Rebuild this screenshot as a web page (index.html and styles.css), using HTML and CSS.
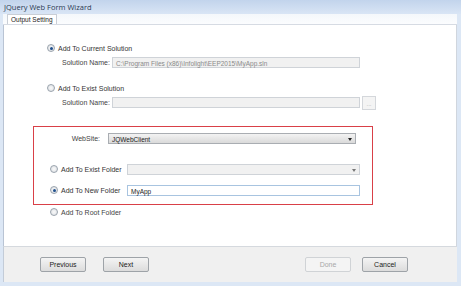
FILE: index.html
```html
<!DOCTYPE html>
<html lang="en">
  <head>
    <meta charset="UTF-8" />
    <title>JQuery Web Form Wizard</title>
    <link rel="stylesheet" href="styles.css">
  </head>
  <body>
    <div class="window">
      <div class="titlebar">JQuery Web Form Wizard</div>

      <div class="tabs">
        <div class="tab">Output Setting</div>
      </div>

      <div class="panel">
        <div class="row opt">
          <span class="radio checked"></span>
          <span>Add To Current Solution</span>
        </div>
        <div class="row sub">
          <span class="label">Solution Name:</span>
          <span class="field disabled">C:\Program Files (x86)\Infolight\EEP2015\MyApp.sln</span>
        </div>

        <div class="row opt gap-lg">
          <span class="radio"></span>
          <span>Add To Exist Solution</span>
        </div>
        <div class="row sub">
          <span class="label">Solution Name:</span>
          <span class="field disabled"></span>
          <span class="browse">...</span>
        </div>

        <div class="highlight">
          <div class="row site">
            <span class="label right">WebSite:</span>
            <span class="field select">JQWebClient<span class="arrow"></span></span>
          </div>
          <div class="row folder exist">
            <span class="radio"></span>
            <span class="folder-label">Add To Exist Folder</span>
            <span class="field disabled wide">
              <span class="arrow light"></span>
            </span>
          </div>
          <div class="row folder new">
            <span class="radio checked"></span>
            <span class="folder-label">Add To New Folder</span>
            <span class="field active wide">MyApp</span>
          </div>
        </div>

        <div class="row folder root">
          <span class="radio"></span>
          <span>Add To Root Folder</span>
        </div>
      </div>

      <div class="footer">
        <div class="btn-group">
          <button class="btn">Previous</button>
          <button class="btn">Next</button>
        </div>
        <div class="btn-group">
          <button class="btn" disabled>Done</button>
          <button class="btn">Cancel</button>
        </div>
      </div>
    </div>
  </body>
</html>
```

FILE: styles.css
```css
/* Window frame */
body {
  margin: 0;
  background: #fff;
  font-family: "Liberation Sans", Arial, sans-serif;
  font-size: 7px;
  color: #333;
}

.window {
  width: 461px;
  height: 286px;
  display: flex;
  flex-direction: column;
  background: #dce7f5;
  box-sizing: border-box;
}

/* Title bar */
.titlebar {
  height: 14px;
  line-height: 15px;
  padding-left: 4px;
  font-family: "Open Sans", "Liberation Sans", sans-serif;
  font-size: 7.5px;
  color: #2a3a52;
  background: linear-gradient(#c2d4ec, #d9e5f5);
}

/* Tab strip */
.tabs {
  height: 10px;
  display: flex;
  padding-left: 4px;
  background: linear-gradient(#f4f7fb, #fbfcfe);
  border-bottom: 1px solid #d6dbe3;
  margin: 0 4px 0 3px;
}

.tab {
  padding: 0 3px;
  line-height: 10px;
  font-size: 6.5px;
  color: #222;
  background: #fff;
  border: 1px solid #c9ced6;
  border-bottom: none;
}

/* Main white panel */
.panel {
  height: 222px;
  margin: 0 4px 0 3px;
  background: #fff;
  border-left: 1px solid #b9c4d4;
  border-right: 1px solid #d0d6de;
  display: flex;
  flex-direction: column;
  box-sizing: border-box;
}

.row {
  height: 12px;
  display: flex;
  align-items: center;
  white-space: nowrap;
}

.opt {
  padding-left: 43px;
  margin-top: 17px;
}

.opt.gap-lg {
  margin-top: 14px;
}

.sub {
  padding-left: 58px;
  margin-top: 2px;
}

.label {
  width: 50px;
  color: #444;
}

.label.right {
  width: 66px;
  text-align: right;
  margin-right: 8px;
}

/* Radio buttons */
.radio {
  width: 6px;
  height: 6px;
  border-radius: 50%;
  border: 1px solid #9aa3ad;
  background: radial-gradient(#fafafa, #d9dde2);
  margin-right: 3px;
  position: relative;
}

.radio.checked::after {
  content: "";
  position: absolute;
  left: 1.5px;
  top: 1.5px;
  width: 3px;
  height: 3px;
  border-radius: 50%;
  background: #1f4f8c;
}

/* Inputs */
.field {
  width: 248px;
  height: 11px;
  line-height: 11px;
  padding-left: 3px;
  box-sizing: border-box;
  border: 1px solid #cfd3d8;
  position: relative;
  font-size: 6.5px;
}

.field.disabled {
  background: #f1f1f1;
  color: #8a8a8a;
}

.field.wide {
  width: 233px;
}

.field.select {
  background: linear-gradient(#f3f3f3, #dadada);
  border-color: #a9adb2;
  color: #222;
}

.field.active {
  background: #fff;
  border-color: #a8c4e0;
  color: #222;
}

.arrow {
  position: absolute;
  right: 3px;
  top: 4px;
  border-left: 2.5px solid transparent;
  border-right: 2.5px solid transparent;
  border-top: 3px solid #222;
}

.arrow.light {
  border-top-color: #777;
}

.browse {
  width: 14px;
  height: 14px;
  margin-left: 2px;
  margin-top: 2px;
  box-sizing: border-box;
  border: 1px solid #d4d7db;
  background: #f4f4f4;
  color: #aaa;
  font-size: 6px;
  text-align: center;
  line-height: 14px;
}

/* Highlighted group */
.highlight {
  width: 340px;
  height: 79px;
  box-sizing: border-box;
  margin: 18px 0 0 29px;
  border: 1.5px solid #d94048;
  display: flex;
  flex-direction: column;
  padding-top: 5px;
}

.folder {
  padding-left: 16px;
}

.folder-label {
  width: 66px;
}

.folder.exist {
  margin-top: 19px;
}

.folder.new {
  margin-top: 9px;
}

.folder.root {
  padding-left: 46px;
  margin-top: 1px;
  color: #444;
}

/* Footer buttons */
.footer {
  height: 35px;
  margin: 0 4px 4px 3px;
  background: #f0f0f0;
  border-top: 1px solid #d5d9de;
  border-left: 1px solid #c3ccd8;
  display: flex;
  justify-content: space-between;
  align-items: center;
  padding: 0 49px 0 36px;
}

.btn-group {
  display: flex;
  gap: 17px;
}

.btn-group + .btn-group {
  gap: 11px;
}

.btn {
  width: 46px;
  height: 15px;
  padding: 0;
  font-family: "Liberation Sans", Arial, sans-serif;
  font-size: 7px;
  color: #222;
  border: 1px solid #9ea3a8;
  border-radius: 2px;
  background: linear-gradient(#f4f4f4, #dcdcdc);
}

.btn:disabled {
  color: #a8a8a8;
  border-color: #d0d3d6;
  background: #f4f4f4;
}
```
